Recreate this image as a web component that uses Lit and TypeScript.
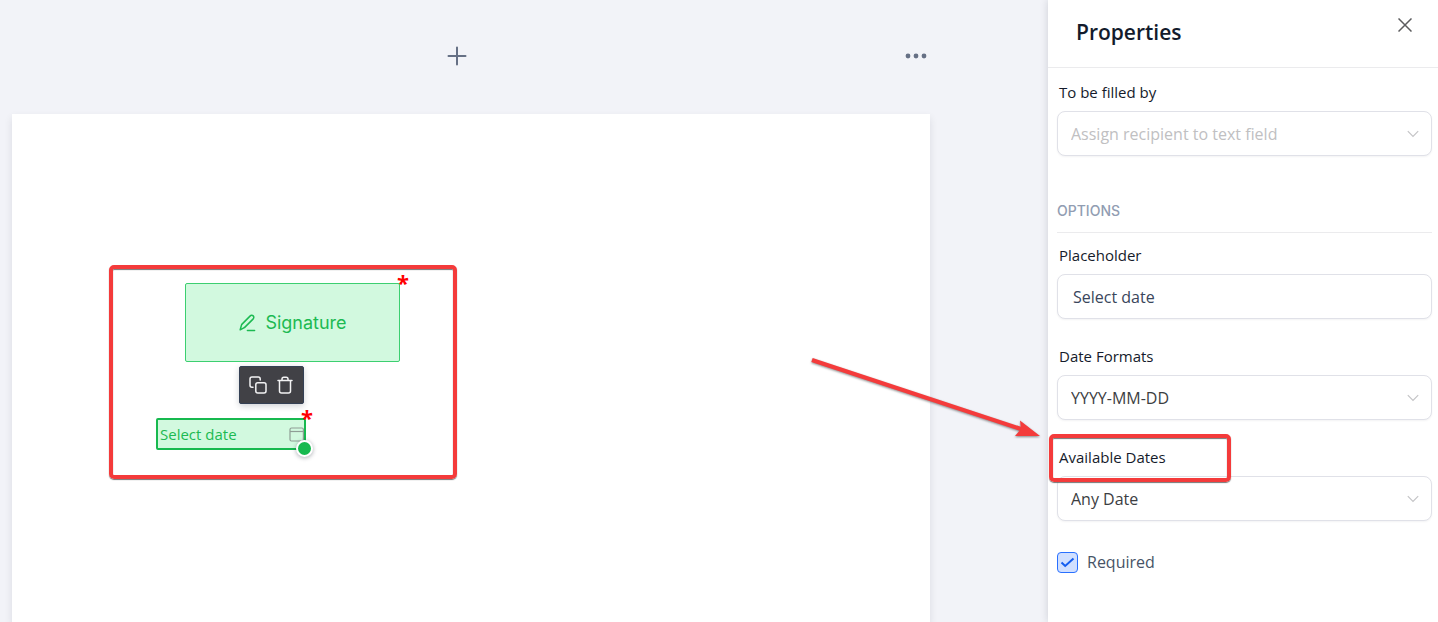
import { LitElement, html, css, svg } from "lit";
import { customElement, property } from "lit/decorators.js";

const chevron = html`<svg class="chevron" width="12" height="8" viewBox="0 0 12 8" aria-hidden="true">
  <path d="M0.8 1.2 6 6.4 11.2 1.2" fill="none" stroke="#c4c4c6" stroke-width="1.2"/>
</svg>`;

const penIcon = svg`<path d="M2.2 15.8 3.4 11.4C3.6 10.7 3.8 10.4 4.3 9.9L12 2.1C13 1.1 14.3 1 15.2 1.9 16.1 2.8 16 4.1 15 5.1L7.2 12.9C6.7 13.4 6.4 13.6 5.8 13.9L2.2 15.8ZM9.4 16.4H16.6"/>`;

@customElement("select-field")
class SelectField extends LitElement {
  @property() label = "";
  @property() value = "";
  @property({ type: Boolean }) empty = false;

  static styles = css`
    :host { display: block; }
    label { display: block; padding-left: 2px; font-size: 15px; line-height: 20px; color: #151b2b; margin-bottom: 9px; }
    .box { display: grid; align-items: center; }
    select {
      grid-area: 1 / 1; appearance: none; width: 100%; height: 45px; margin: 0; padding: 0 36px 0 13px;
      border: 1px solid #e0e1e8; border-radius: 8px; background: #fff; box-shadow: 0 1px 2px rgba(16, 24, 40, 0.05);
      font: inherit; font-size: 16px; color: #3c3e42;
    }
    .empty { color: #c0c0c2; }
    .chevron { grid-area: 1 / 1; justify-self: end; margin-right: 13px; pointer-events: none; }
  `;

  render() {
    return html`
      <label for="control">${this.label}</label>
      <div class="box">
        <select id="control" class=${this.empty ? "empty" : ""}><option>${this.value}</option></select>
        ${chevron}
      </div>`;
  }
}

@customElement("document-canvas")
class DocumentCanvas extends LitElement {
  static styles = css`
    :host { display: flex; flex-direction: column; min-width: 0; padding: 0 118px 0 12px; background: #f2f3f8; }
    button { margin: 0; padding: 0; border: 0; background: none; color: inherit; display: flex; align-items: center; justify-content: center; }
    .bar { display: flex; align-items: center; height: 112px; margin-bottom: 2px; }
    .middle { flex: 1; display: flex; justify-content: center; }
    .icon { width: 28px; height: 28px; color: #667085; }
    .page { position: relative; flex: 1; background: #fff; box-shadow: 0 4px 8px rgba(16, 24, 40, 0.1); }
    .frame {
      position: absolute; left: 97px; top: 151px; width: 348px; height: 214px; box-sizing: border-box;
      border: 4px solid #f43b3b; border-radius: 5px; box-shadow: 0 1px 1px rgba(60, 60, 60, 0.7), inset 0 1px 1px rgba(60, 60, 60, 0.7);
      pointer-events: none;
    }
    .signature {
      position: absolute; left: 173px; top: 169px; width: 215px; height: 79px; box-sizing: border-box;
      gap: 9px; border: 1px solid #3ccf70; border-radius: 2px; background: #d2f9df;
      font: 400 18px/24px Inter, sans-serif; color: #1cba52;
    }
    .tools {
      position: absolute; left: 227px; top: 252px; width: 65px; height: 38px; box-sizing: border-box;
      display: flex; align-items: center; justify-content: center; gap: 9px;
      border: 1px solid #344054; border-radius: 2px; background: #414146; color: #f2f2f3;
      box-shadow: 0 2px 6px rgba(16, 24, 40, 0.2);
    }
    .date {
      position: absolute; left: 144px; top: 304px; width: 150px; height: 32px; box-sizing: border-box;
      display: flex; align-items: center; border: 2px solid #17b94f; border-radius: 2px; background: #d2f9df;
    }
    .date input {
      flex: 1; min-width: 0; margin: 0; padding: 0 0 0 2px; border: 0; outline: 0; background: none;
      font: inherit; font-size: 15px; color: #1cba52;
    }
    .handle {
      position: absolute; left: 284px; top: 326px; width: 17px; height: 17px; box-sizing: border-box;
      border: 2px solid #fff; border-radius: 50%; background: #17b94f; box-shadow: 0 1px 4px rgba(16, 24, 40, 0.35);
    }
    .star { position: absolute; font: 700 22px/24px "Open Sans", sans-serif; color: #ff0000; }
    .star-signature { left: 385px; top: 156px; }
    .star-date { left: 289px; top: 291px; }
  `;

  render() {
    return html`
      <div class="bar">
        <div class="middle">
          <button class="icon" aria-label="Add">
            <svg width="20" height="20" viewBox="0 0 20 20"><path d="M10 1.5V18.5M1.5 10H18.5" fill="none" stroke="currentColor" stroke-width="2" stroke-linecap="round"/></svg>
          </button>
        </div>
        <button class="icon" aria-label="More">
          <svg width="22" height="6" viewBox="0 0 22 6" fill="currentColor"><circle cx="3" cy="3" r="2.4"/><circle cx="11" cy="3" r="2.4"/><circle cx="19" cy="3" r="2.4"/></svg>
        </button>
      </div>
      <div class="page">
        <button class="signature">
          <svg width="18" height="18" viewBox="0 0 18 18" fill="none" stroke="currentColor" stroke-width="1.5" stroke-linecap="round" stroke-linejoin="round">${penIcon}</svg>
          Signature
        </button>
        <span class="star star-signature">*</span>
        <div class="tools">
          <button aria-label="Duplicate">
            <svg width="18" height="18" viewBox="0 0 18 18" fill="none" stroke="currentColor" stroke-width="1.5" stroke-linecap="round"><rect x="6.8" y="6.8" width="10.2" height="10.2" rx="2"/><path d="M4 11.2H3A2 2 0 0 1 1 9.2V3A2 2 0 0 1 3 1H9.2A2 2 0 0 1 11.2 3V4"/></svg>
          </button>
          <button aria-label="Delete">
            <svg width="18" height="18" viewBox="0 0 18 18" fill="none" stroke="currentColor" stroke-width="1.5" stroke-linecap="round" stroke-linejoin="round"><path d="M2 4.5H16M3.5 4.5V15A2 2 0 0 0 5.5 17H12.5A2 2 0 0 0 14.5 15V4.5M6 4.5V3A1.8 1.8 0 0 1 7.8 1.2H10.2A1.8 1.8 0 0 1 12 3V4.5"/></svg>
          </button>
        </div>
        <div class="date">
          <input aria-label="Date" value="Select date">
          <svg width="15" height="15" viewBox="0 0 15 15" fill="none" stroke="#8f9e95" stroke-width="1.2"><rect x="1" y="1" width="13.4" height="13" rx="1.5"/><path d="M1 4.5H14.4"/></svg>
        </div>
        <span class="star star-date">*</span>
        <span class="handle"></span>
        <div class="frame"></div>
      </div>`;
  }
}

@customElement("properties-panel")
class PropertiesPanel extends LitElement {
  static styles = css`
    :host { display: block; background: #fff; box-shadow: 0 0 8px rgba(16, 24, 40, 0.16); }
    header { display: flex; justify-content: space-between; align-items: flex-start; height: 67px; padding: 0 21px 0 28px; border-bottom: 1px solid #ebebed; }
    h1 { margin: 18px 0 0; font-size: 21px; line-height: 28px; font-weight: 600; color: #131b2c; }
    .close { margin: 13px 0 0; padding: 0; width: 24px; height: 24px; border: 0; background: none; display: flex; align-items: center; justify-content: center; }
    .body { padding: 14px 6px 0 9px; }
    h2 { margin: 45px 0 12px; padding-bottom: 11px; border-bottom: 1px solid #ebebed; font: 500 14px/20px Inter, sans-serif; color: #919db2; }
    .fields { display: flex; flex-direction: column; gap: 27px; }
    .label { display: block; padding-left: 2px; font-size: 15px; line-height: 20px; color: #151b2b; margin-bottom: 9px; }
    .text {
      display: block; box-sizing: border-box; width: 100%; height: 45px; margin: 0; padding: 0 15px;
      border: 1px solid #e0e1e8; border-radius: 8px; background: #fff; box-shadow: 0 1px 2px rgba(16, 24, 40, 0.05);
      font: inherit; font-size: 16px; color: #3a465b;
    }
    .marked { position: relative; }
    .mark {
      position: absolute; left: -8px; top: -13px; width: 182px; height: 48px; box-sizing: border-box;
      border: 4px solid #f43b3b; border-radius: 5px; box-shadow: 0 1px 1px rgba(60, 60, 60, 0.7), inset 0 1px 1px rgba(60, 60, 60, 0.7);
      pointer-events: none;
    }
    .arrow { position: absolute; left: -248px; top: -93px; pointer-events: none; filter: drop-shadow(0 1px 1px rgba(60, 60, 60, 0.6)); }
    .required { display: flex; align-items: center; gap: 9px; margin-top: 29px; font-size: 16px; line-height: 24px; color: #475467; }
    .tick { display: grid; place-items: center; }
    .tick input { grid-area: 1 / 1; appearance: none; width: 21px; height: 21px; margin: 0; border: 1px solid #2970ff; border-radius: 4px; background: #d1e0ff; }
    .tick svg { grid-area: 1 / 1; pointer-events: none; }
  `;

  render() {
    return html`
      <header>
        <h1>Properties</h1>
        <button class="close" aria-label="Close">
          <svg width="14" height="14" viewBox="0 0 14 14"><path d="M0.5 0.5 13.5 13.5M13.5 0.5 0.5 13.5" fill="none" stroke="#5c5c5e" stroke-width="1.5"/></svg>
        </button>
      </header>
      <div class="body">
        <select-field label="To be filled by" value="Assign recipient to text field" empty></select-field>
        <h2>OPTIONS</h2>
        <div class="fields">
          <div>
            <label class="label" for="placeholder">Placeholder</label>
            <input class="text" id="placeholder" value="Select date">
          </div>
          <select-field label="Date Formats" value="YYYY-MM-DD"></select-field>
          <div class="marked">
            <select-field label="Available Dates" value="Any Date"></select-field>
            <div class="mark"></div>
            <svg class="arrow" width="236" height="88" viewBox="809 354 236 88" aria-hidden="true">
              <path d="M812 360 1024 430" stroke="#f43b3b" stroke-width="4.2" fill="none"/>
              <path d="M1040 436 1020 420.5 1021 429 1015 436Z" fill="#f43b3b"/>
            </svg>
          </div>
        </div>
        <label class="required">
          <span class="tick">
            <input type="checkbox" checked>
            <svg width="15" height="11" viewBox="0 0 15 11"><path d="M1.5 5.5 5.2 9 13.5 1.5" fill="none" stroke="#155eef" stroke-width="2"/></svg>
          </span>
          Required
        </label>
      </div>`;
  }
}

@customElement("app-root")
class AppRoot extends LitElement {
  static styles = css`
    :host {
      display: grid; grid-template-columns: minmax(0, 1fr) 390px; min-height: 100vh;
      font-family: "Segoe UI", "Open Sans", sans-serif;
    }
  `;

  render() {
    return html`<document-canvas></document-canvas><properties-panel></properties-panel>`;
  }
}
